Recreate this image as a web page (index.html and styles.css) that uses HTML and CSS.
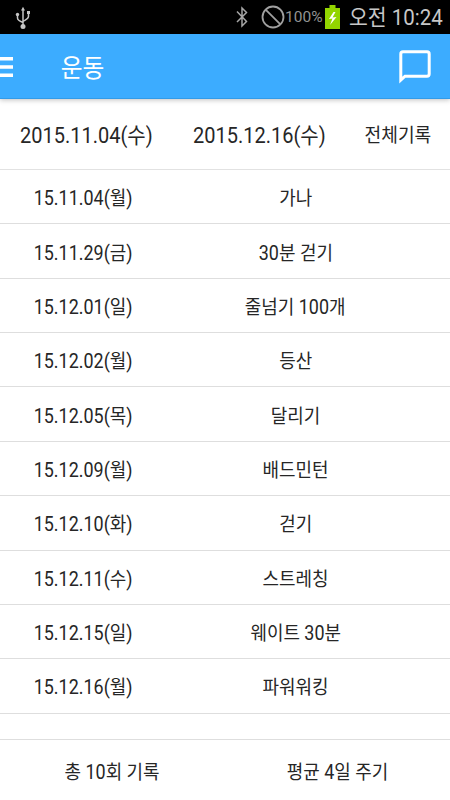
FILE: index.html
```
<!DOCTYPE html>
<html lang="ko">
<head>
    <meta charset="UTF-8">
    <meta name="viewport" content="width=device-width, initial-scale=1.0">
    <title>운동</title>
    <link rel="stylesheet" href="styles.css">
</head>
<body>
    <div class="statusbar">
        <svg class="usb" width="16" height="24" viewBox="0 0 16 24" fill="none" stroke="#c4c4c4" stroke-width="1.5">
            <path d="M8 4v16M2.5 9v3c0 2 1.500 3 5.500 4.500M13.500 7.500v3c0 2-1.500 2.500-5.500 5"/>
            <path d="M8 .8l2 3.700H6z" fill="#c4c4c4" stroke="none"/>
            <circle cx="2.500" cy="8.500" r="1.700" fill="#c4c4c4" stroke="none"/>
            <path d="M12 5h3v3h-3z" fill="#c4c4c4" stroke="none"/>
            <circle cx="8" cy="20.500" r="2.500" fill="#c4c4c4" stroke="none"/>
        </svg>
        <svg class="bluetooth" width="12" height="22" viewBox="0 0 12 22" fill="none" stroke="#a6a6a6" stroke-width="1.500">
            <path d="M1 5.500l9.500 10L6 20V2l4.500 4.500L1 16"/>
        </svg>
        <svg class="blocked" width="24" height="24" viewBox="0 0 24 24" fill="none" stroke="#a0a0a0" stroke-width="1.800">
            <circle cx="12" cy="12" r="10.500"/>
            <path d="M4.600 4.600l14.800 14.800"/>
        </svg>
        <span class="percent">100%</span>
        <svg class="battery" width="15" height="24" viewBox="0 0 15 24">
            <path d="M0 3h4.500V0h6v3H15v21H0z" fill="#93d500"/>
            <path d="M8.500 7L4 14l3.500-.5L5 20l6.500-8-4 .5L10.500 7z" fill="#fff"/>
        </svg>
        <span class="clock">오전 10:24</span>
    </div>

    <div class="header">
        <svg class="menu" width="13" height="21" viewBox="0 0 13 21" fill="#fff">
            <path d="M0 0h13v3.500H0zM0 8.300h13v3.500H0zM0 16.500h13v3.500H0z"/>
        </svg>
        <h1><span>운동</span></h1>
        <svg class="chat" width="32" height="34" viewBox="0 0 32 34" fill="none" stroke="#fff" stroke-width="3">
            <path d="M1.800 30V4q0-2.200 2.200-2.200h24Q30.200 1.800 30.200 4v20q0 2.200-2.200 2.200H6z"/>
        </svg>
    </div>

    <div class="period">
        <div class="from"><span>2015.11.04(수)</span></div>
        <div class="to"><span>2015.12.16(수)</span></div>
        <div class="all"><span>전체기록</span></div>
    </div>

    <div class="list">
        <div class="row"><div class="date"><span>15.11.04(월)</span></div><div class="name"><span>가나</span></div></div>
        <div class="row"><div class="date"><span>15.11.29(금)</span></div><div class="name"><span>30분 걷기</span></div></div>
        <div class="row"><div class="date"><span>15.12.01(일)</span></div><div class="name"><span>줄넘기 100개</span></div></div>
        <div class="row"><div class="date"><span>15.12.02(월)</span></div><div class="name"><span>등산</span></div></div>
        <div class="row"><div class="date"><span>15.12.05(목)</span></div><div class="name"><span>달리기</span></div></div>
        <div class="row"><div class="date"><span>15.12.09(월)</span></div><div class="name"><span>배드민턴</span></div></div>
        <div class="row"><div class="date"><span>15.12.10(화)</span></div><div class="name"><span>걷기</span></div></div>
        <div class="row"><div class="date"><span>15.12.11(수)</span></div><div class="name"><span>스트레칭</span></div></div>
        <div class="row"><div class="date"><span>15.12.15(일)</span></div><div class="name"><span>웨이트 30분</span></div></div>
        <div class="row"><div class="date"><span>15.12.16(월)</span></div><div class="name"><span>파워워킹</span></div></div>
    </div>

    <div class="summary">
        <div><span>총 10회 기록</span></div>
        <div><span>평균 4일 주기</span></div>
    </div>
</body>
</html>
```
FILE: styles.css
```
* {
    box-sizing: border-box;
}
body {
    display: flex;
    flex-direction: column;
    height: 800px;
    margin: 0;
    overflow: hidden;
    font-family: Roboto, 'Noto Sans CJK KR', sans-serif;
    color: #262626;
    background-color: #fff;
    white-space: nowrap;
}
svg {
    display: block;
    flex: none;
}
/* slightly condensed text */
span {
    display: inline-block;
    transform: scaleX(0.93);
}
.statusbar {
    display: flex;
    align-items: center;
    height: 34px;
    padding-left: 15px;
    background-color: #000;
}
.usb {
    margin-top: 2px;
}
.bluetooth {
    margin-left: 205px;
}
.blocked {
    margin-left: 13px;
}
.percent {
    width: 38px;
    font-size: 15.5px;
    color: #929292;
    transform: none;
}
.battery {
    margin-left: 2px;
}
.clock {
    margin-left: 9px;
    margin-bottom: 4px;
    font-size: 22px;
    color: #c8c8c8;
    transform-origin: left;
}
.header {
    display: flex;
    align-items: center;
    height: 65px;
    padding-right: 19px;
    background-color: #3cacff;
    border-bottom: 1px solid #329be8;
    box-shadow: 0 1px 5px rgba(0, 0, 0, 0.25);
}
.menu {
    margin-top: 3px;
}
.chat {
    margin-top: 2px;
}
h1 {
    margin: 0 auto 2px 46px;
    font-size: 25.5px;
    font-weight: normal;
    color: #fff;
}
.period {
    display: flex;
    align-items: center;
    height: 71px;
    padding-bottom: 2px;
    border-bottom: 1px solid #e2e2e2;
    font-size: 21.5px;
}
.from {
    width: 173px;
    text-align: center;
}
.to {
    width: 172px;
    text-align: center;
}
.all {
    width: 105px;
    text-align: center;
    font-size: 19.5px;
}
.row {
    display: flex;
    align-items: center;
    height: 54.36px;
    padding-top: 1px;
    border-bottom: 1px solid #dedede;
    font-size: 19.3px;
}
.date {
    width: 167px;
    text-align: center;
}
.name {
    width: 257px;
    text-align: center;
}
.summary {
    display: flex;
    align-items: center;
    flex: 1;
    margin-top: 25px;
    padding-top: 2px;
    border-top: 1px solid #dedede;
    font-size: 19.3px;
}
.summary div {
    width: 225px;
    text-align: center;
}
```
